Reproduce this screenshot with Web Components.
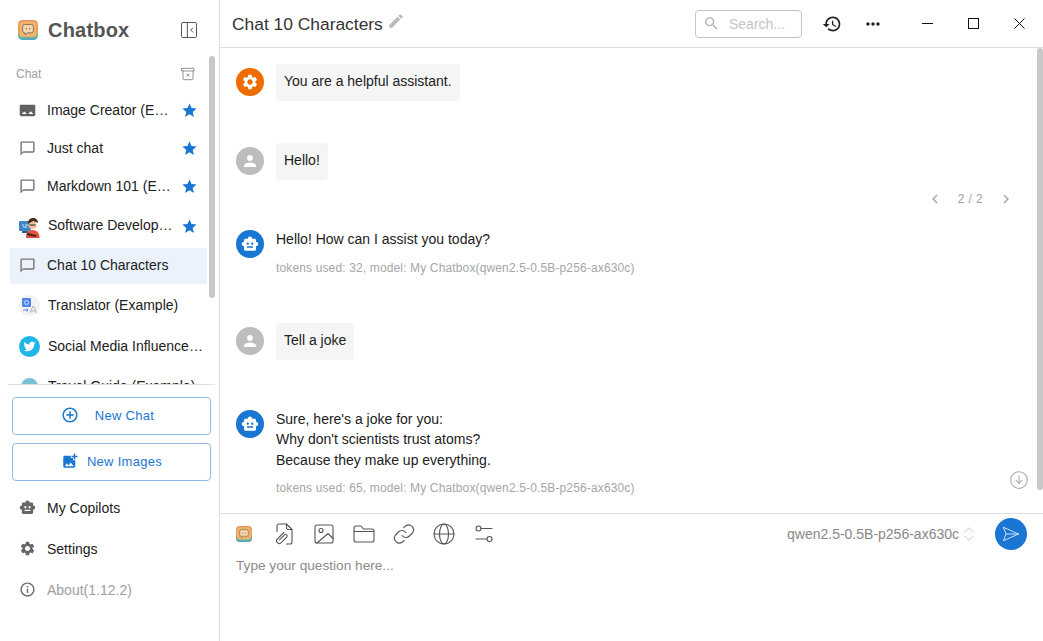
<!DOCTYPE html>
<html>
<head>
<meta charset="utf-8">
<title>Chatbox</title>
<style>
  html, body { margin: 0; height: 100%; overflow: hidden; background: #fff; }
  body { font-family: "Liberation Sans", Arial, sans-serif; font-size: 14px; color: #212121; }
</style>
</head>
<body>
<chat-app>
  <chat-sidebar slot="sidebar">
    <session-item icon="panorama" starred>Image Creator (Example)</session-item>
    <session-item icon="bubble" starred>Just chat</session-item>
    <session-item icon="bubble" starred>Markdown 101 (Example)</session-item>
    <session-item avatar="dev" starred h="40" lift>Software Developer (Example)</session-item>
    <session-item icon="bubble" selected lift>Chat 10 Characters</session-item>
    <session-item avatar="translate" h="38">Translator (Example)</session-item>
    <session-item avatar="twitter" h="40">Social Media Influencer (Example)</session-item>
    <session-item avatar="globe" h="36">Travel Guide (Example)</session-item>
  </chat-sidebar>
  <chat-main slot="main">
    <chat-message role="system" bubble style="--after:42px">You are a helpful assistant.</chat-message>
    <chat-message role="user" bubble style="--after:0px">Hello!</chat-message>
    <msg-pager></msg-pager>
    <chat-message role="assistant" tokens="tokens used: 32, model: My Chatbox(qwen2.5-0.5B-p256-ax630c)" style="--after:47px">Hello! How can I assist you today?</chat-message>
    <chat-message role="user" bubble style="--after:49px">Tell a joke</chat-message>
    <chat-message role="assistant" tokens="tokens used: 65, model: My Chatbox(qwen2.5-0.5B-p256-ax630c)">Sure, here's a joke for you:<br>Why don't scientists trust atoms?<br>Because they make up everything.</chat-message>
  </chat-main>
</chat-app>

<script>
const paths = {
  robot: 'M20 9V7c0-1.1-.9-2-2-2h-3c0-1.66-1.34-3-3-3S9 3.34 9 5H6c-1.1 0-2 .9-2 2v2c-1.66 0-3 1.34-3 3s1.34 3 3 3v4c0 1.1.9 2 2 2h12c1.1 0 2-.9 2-2v-4c1.66 0 3-1.34 3-3s-1.34-3-3-3zM7.5 11.5c0-.83.67-1.5 1.5-1.5s1.5.67 1.5 1.5S9.83 13 9 13s-1.5-.67-1.5-1.5zM16 17H8v-2h8v2zm-1-4c-.83 0-1.5-.67-1.5-1.5S14.17 10 15 10s1.5.67 1.5 1.5S15.83 13 15 13z',
  gear: 'M19.14 12.94c.04-.3.06-.61.06-.94 0-.32-.02-.64-.07-.94l2.03-1.58c.18-.14.23-.41.12-.61l-1.92-3.32c-.12-.22-.37-.29-.59-.22l-2.39.96c-.5-.38-1.03-.7-1.62-.94l-.36-2.54c-.04-.24-.24-.41-.48-.41h-3.84c-.24 0-.43.17-.47.41l-.36 2.54c-.59.24-1.13.57-1.62.94l-2.39-.96c-.22-.08-.47 0-.59.22L2.74 8.87c-.12.21-.08.47.12.61l2.03 1.58c-.05.3-.09.63-.09.94s.02.64.07.94l-2.03 1.58c-.18.14-.23.41-.12.61l1.92 3.32c.12.22.37.29.59.22l2.39-.96c.5.38 1.03.7 1.62.94l.36 2.54c.05.24.24.41.48.41h3.84c.24 0 .44-.17.47-.41l.36-2.54c.59-.24 1.13-.56 1.62-.94l2.39.96c.22.08.47 0 .59-.22l1.92-3.32c.12-.22.07-.47-.12-.61l-2.01-1.58zM12 15.6c-1.98 0-3.6-1.62-3.6-3.6s1.62-3.6 3.6-3.6 3.6 1.62 3.6 3.6-1.62 3.6-3.6 3.6z',
  person: 'M12 12c2.21 0 4-1.79 4-4s-1.79-4-4-4-4 1.79-4 4 1.79 4 4 4zm0 2c-2.67 0-8 1.34-8 4v2h16v-2c0-2.66-5.33-4-8-4z',
  bubble: 'M20 2H4c-1.1 0-2 .9-2 2v18l4-4h14c1.1 0 2-.9 2-2V4c0-1.1-.9-2-2-2zm0 14H6l-2 2V4h16v12z',
  star: 'M12 17.27 18.18 21l-1.64-7.03L22 9.24l-7.19-.61L12 2 9.19 8.63 2 9.24l5.46 4.73L5.82 21z',
  panorama: 'M23 18V6c0-1.1-.9-2-2-2H3c-1.1 0-2 .9-2 2v12c0 1.1.9 2 2 2h18c1.1 0 2-.9 2-2zM4 17l3.500-3.500L10 16l1 1zM13 17l3.500-4 4 4z',
  addcircle: 'M13 7h-2v4H7v2h4v4h2v-4h4v-2h-4V7zm-1-5C6.48 2 2 6.48 2 12s4.48 10 10 10 10-4.48 10-10S17.52 2 12 2zm0 18c-4.41 0-8-3.59-8-8s3.59-8 8-8 8 3.59 8 8-3.59 8-8 8z',
  addphoto: 'M19 7v2.99s-1.99.01-2 0V7h-3s.01-1.99 0-2h3V2h2v3h3v2h-3zm-3 4V8h-3V5H5c-1.1 0-2 .9-2 2v12c0 1.1.9 2 2 2h12c1.1 0 2-.9 2-2v-8h-3zM5 19l3-4 2 3 3-4 4 5H5z',
  info: 'M11 7h2v2h-2zm0 4h2v6h-2zm1-9C6.48 2 2 6.48 2 12s4.48 10 10 10 10-4.48 10-10S17.52 2 12 2zm0 18c-4.41 0-8-3.59-8-8s3.59-8 8-8 8 3.59 8 8-3.59 8-8 8z',
  edit: 'M3 17.25V21h3.75L17.81 9.94l-3.75-3.75L3 17.25zM20.71 7.04c.39-.39.39-1.02 0-1.41l-2.34-2.34c-.39-.39-1.02-.39-1.41 0l-1.83 1.83 3.75 3.75 1.83-1.83z',
  search: 'M15.5 14h-.79l-.28-.27C15.41 12.59 16 11.11 16 9.5 16 5.91 13.09 3 9.5 3S3 5.91 3 9.5 5.91 16 9.5 16c1.61 0 3.09-.59 4.23-1.57l.27.28v.79l5 4.99L20.49 19l-4.99-5zm-6 0C7.01 14 5 11.99 5 9.5S7.01 5 9.5 5 14 7.01 14 9.5 11.99 14 9.5 14z',
  history: 'M13 3c-4.97 0-9 4.03-9 9H1l3.89 3.89.07.14L9 12H6c0-3.87 3.13-7 7-7s7 3.13 7 7-3.13 7-7 7c-1.93 0-3.68-.79-4.94-2.06l-1.42 1.42C8.27 19.99 10.51 21 13 21c4.97 0 9-4.03 9-9s-4.03-9-9-9zm-1 5v5l4.28 2.54.72-1.21-3.5-2.08V8H12z',
  more: 'M6 10c-1.1 0-2 .9-2 2s.9 2 2 2 2-.9 2-2-.9-2-2-2zm12 0c-1.1 0-2 .9-2 2s.9 2 2 2 2-.9 2-2-.9-2-2-2zm-6 0c-1.1 0-2 .9-2 2s.9 2 2 2 2-.9 2-2-.9-2-2-2z',
  prev: 'M15.41 7.41 14 6l-6 6 6 6 1.41-1.41L10.83 12z',
  next: 'M10 6 8.59 7.41 13.17 12l-4.58 4.59L10 18l6-6z'
}

// stroke icons for the toolbar, all on a 24 box
const strokes = {
  filepin: '<path d="M5 9.500V4a2 2 0 0 1 2-2h7.500L20 7.500V20a2 2 0 0 1-2 2h-3.500"/><path d="M14.500 2v4a1.500 1.500 0 0 0 1.500 1.500h4"/><path d="M11.800 10.500 5.200 17.100a2.700 2.700 0 0 0 3.800 3.800l5.700-5.800a1.600 1.600 0 0 0-2.300-2.300l-5 5"/>',
  image: '<rect x="3" y="3" width="18" height="18" rx="2"/><circle cx="9" cy="8.500" r="2"/><path d="M21 16.500l-5-5L5 21"/>',
  folder: '<path d="M2 6a2 2 0 0 1 2-2h5l2.500 3H20a2 2 0 0 1 2 2v9a2 2 0 0 1-2 2H4a2 2 0 0 1-2-2z"/><path d="M2 9.500h20"/>',
  link: '<path d="M10 13.500a5 5 0 0 0 7.500.5l3-3a5 5 0 0 0-7-7l-1.700 1.700"/><path d="M14 10.500a5 5 0 0 0-7.500-.5l-3 3a5 5 0 0 0 7 7l1.700-1.700"/>',
  globe: '<circle cx="12" cy="12" r="10"/><path d="M2 12h20"/><ellipse cx="12" cy="12" rx="4.500" ry="10"/>',
  sliders: '<circle cx="6.500" cy="6.500" r="2.500"/><path d="M9 6.500h11"/><circle cx="17.500" cy="17" r="2.500"/><path d="M15 17H4"/>',
  sidebar: '<rect x="3" y="3" width="18" height="18" rx="1.500"/><path d="M10 3v18"/><path d="M16.500 9.500 14 12l2.500 2.500"/>',
  archive: '<path d="M3 3.500h18v4H3z"/><path d="M4.500 7.500V19a1.500 1.500 0 0 0 1.500 1.500h12a1.500 1.500 0 0 0 1.500-1.500V7.500"/><path d="M10.300 12l3.400 3.400M13.700 12l-3.400 3.400"/>',
  down: '<circle cx="12" cy="12" r="10"/><path d="M12 7v9"/><path d="M8.500 12.500 12 16l3.500-3.500"/>',
  updown: '<path d="M7 9.500 12 4.500l5 5"/><path d="M7 14.500l5 5 5-5"/>',
  send: '<path d="M3 4l18 8-18 8 3-8z"/><path d="M6 12h15"/>'
}

class AppIcon extends HTMLElement {
  connectedCallback() {
    const name = this.getAttribute('name')
    const size = this.getAttribute('size') || 20
    const color = this.getAttribute('color') || '#666'
    const sw = this.getAttribute('sw') || 1.5
    const inner = paths[name]
      ? `<path fill="${color}" fill-rule="evenodd" d="${paths[name]}"/>`
      : `<g fill="none" stroke="${color}" stroke-width="${sw}" stroke-linecap="round" stroke-linejoin="round">${strokes[name]}</g>`
    this.attachShadow({ mode: 'open' }).innerHTML = `
      <style>:host { display: inline-flex; flex: none; width: ${size}px; height: ${size}px; } svg { display: block; }</style>
      <svg width="${size}" height="${size}" viewBox="0 0 24 24">${inner}</svg>`
  }
}
customElements.define('app-icon', AppIcon)

class AppLogo extends HTMLElement {
  connectedCallback() {
    const size = this.getAttribute('size') || 20
    this.attachShadow({ mode: 'open' }).innerHTML = `
      <style>:host { display: inline-flex; flex: none; } svg { display: block; }</style>
      <svg width="${size}" height="${size}" viewBox="0 0 20 20">
        <defs>
          <linearGradient id="edge" x1="0" y1="0" x2="0" y2="1">
            <stop offset="0" stop-color="#e8915f"/><stop offset=".55" stop-color="#e9a451"/>
            <stop offset=".8" stop-color="#6dbb8c"/><stop offset="1" stop-color="#4fa6c9"/>
          </linearGradient>
        </defs>
        <rect width="20" height="20" rx="4.500" fill="url(#edge)"/>
        <rect x="1.600" y="1.600" width="16.800" height="15.400" rx="3" fill="#f2b46d"/>
        <path d="M6.600 4.600h6.800a2 2 0 0 1 2 2v4.200a2 2 0 0 1-2 2H9.400L7 14.600v-1.800h-.4a2 2 0 0 1-2-2V6.600a2 2 0 0 1 2-2z" fill="#f8d7ae" stroke="#7b6a58" stroke-width=".9"/>
        <circle cx="8.300" cy="8.700" r=".7" fill="#7b6a58"/><circle cx="11.700" cy="8.700" r=".7" fill="#7b6a58"/>
      </svg>`
  }
}
customElements.define('app-logo', AppLogo)

// the little picture avatars of the example copilots
const avatars = {
  dev: `<svg width="21" height="21" viewBox="0 0 21 21" style="margin-top:2px">
    <rect x="0" y="4" width="12" height="10" rx="1" fill="#3f86c6"/><path d="M3 14h6v2H3z" fill="#2f5f8c"/>
    <path d="M3 8h2M6 8h3M4 10h4" stroke="#cfe6fa"/>
    <path d="M7 21c0-5 2-8 6.500-8s7 3 7 8z" fill="#e8503a"/>
    <circle cx="13.500" cy="8" r="4" fill="#f2c09a"/><path d="M9 7c0-4 2-6 5-6s5 2 5 5l-2-1-3-1z" fill="#4a2a1a"/>
    <path d="M10.500 8h6" stroke="#222" stroke-width="1"/><path d="M8 17l9 2" stroke="#3a2a22" stroke-width="2"/></svg>`,
  translate: `<svg width="21" height="21" viewBox="0 0 21 21">
    <circle cx="10.500" cy="10.500" r="10.500" fill="#f2f2f2"/>
    <rect x="3" y="3" width="9" height="9" rx="1" fill="#4f86ec"/><circle cx="7.500" cy="7.500" r="2" fill="none" stroke="#cfe0fb"/>
    <path d="M4 15h5l-1.500-1.500M9 15l-1.500 1.500" stroke="#4f86ec" fill="none"/>
    <path d="M11 18l2.800-6.500h1l2.800 6.500M12.200 16h4" stroke="#aab4c4" fill="none"/></svg>`,
  twitter: `<svg width="21" height="21" viewBox="0 0 21 21">
    <circle cx="10.500" cy="10.500" r="10.500" fill="#1fb6ea"/>
    <g transform="translate(4.500 4.500) scale(.5)"><path fill="#fff" d="M23.953 4.57a10 10 0 01-2.825.775 4.958 4.958 0 002.163-2.723c-.951.555-2.005.959-3.127 1.184a4.92 4.92 0 00-8.384 4.482C7.69 8.095 4.067 6.13 1.64 3.162a4.822 4.822 0 00-.666 2.475c0 1.71.87 3.213 2.188 3.971a4.904 4.904 0 01-2.228-.616v.06a4.923 4.923 0 003.946 4.827 4.996 4.996 0 01-2.212.085 4.936 4.936 0 004.604 3.417 9.867 9.867 0 01-6.102 2.105c-.39 0-.779-.023-1.17-.067a13.995 13.995 0 007.557 2.209c9.053 0 13.998-7.496 13.998-13.985 0-.21 0-.42-.015-.63A9.935 9.935 0 0024 4.59z"/></g></svg>`,
  globe: `<svg width="21" height="21" viewBox="0 0 21 21"><circle cx="10.500" cy="10.500" r="8.500" fill="#7cc0d8"/></svg>`
}

class SessionItem extends HTMLElement {
  connectedCallback() {
    const icon = this.getAttribute('icon')
    const avatar = this.getAttribute('avatar')
    const h = this.getAttribute('h') || 36
    const lead = avatar
      ? `<span class="avatar">${avatars[avatar]}</span>`
      : `<span class="lead"><app-icon name="${icon}" size="17" color="${icon === 'panorama' ? '#616161' : '#757575'}"></app-icon></span>`
    const star = this.hasAttribute('starred')
      ? `<app-icon class="star" name="star" size="17" color="#1976d2"></app-icon>` : ''
    this.attachShadow({ mode: 'open' }).innerHTML = `
      <style>
        :host { display: flex; align-items: center; height: ${h}px; margin-bottom: 2px; padding: 0 4px 0 9px; color: #212121; }
        :host([selected]) { background: #ebf2fb; }
        :host([lift]) .name { margin-top: -2px; }
        :host([selected]) .lead { margin-top: -2px; }
        .lead { display: flex; width: 17px; margin-right: 11px; }
        .avatar { display: flex; width: 21px; margin-right: 8px; }
        .name { flex: 1; min-width: 0; white-space: nowrap; overflow: hidden; text-overflow: ellipsis; font-size: 14px; line-height: 20px; }
        .star { margin-left: 7.500px; margin-right: 5px; }
      </style>
      ${lead}<span class="name"><slot></slot></span>${star}`
  }
}
customElements.define('session-item', SessionItem)

class SideButton extends HTMLElement {
  connectedCallback() {
    this.attachShadow({ mode: 'open' }).innerHTML = `
      <style>
        :host { display: flex; align-items: center; justify-content: center; gap: var(--gap, 16px); box-sizing: border-box; height: 38px; padding-bottom: 2px; border: 1px solid #8dbbe9; border-radius: 4px; color: #1976d2; font-size: 13px; letter-spacing: .3px; }
      </style>
      <app-icon name="${this.getAttribute('icon')}" size="18" color="#1976d2"></app-icon><slot></slot>`
  }
}
customElements.define('side-button', SideButton)

class SideLink extends HTMLElement {
  connectedCallback() {
    const muted = this.hasAttribute('muted')
    this.attachShadow({ mode: 'open' }).innerHTML = `
      <style>
        :host { display: flex; align-items: center; height: 41px; padding-left: 19px; color: ${muted ? '#9e9e9e' : '#212121'}; font-size: 14px; }
        app-icon { margin-right: 11px; }
      </style>
      <app-icon name="${this.getAttribute('icon')}" size="17" color="#666"></app-icon><slot></slot>`
  }
}
customElements.define('side-link', SideLink)

const sidebarTemplate = document.createElement('template')
sidebarTemplate.innerHTML = `
<style>
  :host { display: flex; flex-direction: column; height: 100%; box-sizing: border-box; border-right: 1px solid #e0e0e0; }
  .brand { display: flex; align-items: center; height: 56px; padding: 4px 20px 0 18px; box-sizing: border-box; }
  .brand b { flex: 1; margin-left: 10px; font-size: 20px; font-weight: 700; letter-spacing: .2px; color: #555; }
  .list { position: relative; height: 329px; box-sizing: border-box; overflow: hidden; border-bottom: 1px solid #e0e0e0; margin: 0 4px 0 8px; padding: 0 8px 0 2px; }
  .section { display: flex; align-items: center; justify-content: space-between; height: 36px; margin-left: -2px; padding: 0 11px 0 8px; color: #9e9e9e; font-size: 12px; }
  .thumb { position: absolute; right: 0; top: 0; width: 6px; height: 242px; background: #c8c8c8; border-radius: 3px; }
  .actions { display: flex; flex-direction: column; gap: 8px; padding: 12px 8px 6px 12px; }
  .links { display: flex; flex-direction: column; }
</style>
<div class="brand">
  <app-logo size="20"></app-logo><b>Chatbox</b>
  <app-icon name="sidebar" size="20" color="#555" sw="1.200"></app-icon>
</div>
<div class="list">
  <div class="section"><span>Chat</span><app-icon name="archive" size="16" color="#777" sw="1.200"></app-icon></div>
  <slot></slot>
  <div class="thumb"></div>
</div>
<div class="actions">
  <side-button icon="addcircle" style="padding-right:8px">New Chat</side-button>
  <side-button icon="addphoto" style="--gap:8px">New Images</side-button>
</div>
<div class="links">
  <side-link icon="robot">My Copilots</side-link>
  <side-link icon="gear">Settings</side-link>
  <side-link icon="info" muted>About(1.12.2)</side-link>
</div>`

class ChatSidebar extends HTMLElement {
  constructor() {
    super()
    this.attachShadow({ mode: 'open' }).append(sidebarTemplate.content.cloneNode(true))
  }
}
customElements.define('chat-sidebar', ChatSidebar)

class ChatMessage extends HTMLElement {
  connectedCallback() {
    const role = this.getAttribute('role')
    const look = {
      system: ['#ef6c00', 'gear'],
      user: ['#bdbdbd', 'person'],
      assistant: ['#1976d2', 'robot']
    }[role]
    const tokens = this.getAttribute('tokens')
    this.attachShadow({ mode: 'open' }).innerHTML = `
      <style>
        :host { display: flex; gap: 12px; padding-left: 16px; margin-bottom: var(--after, 0px); color: #212121; }
        .avatar { display: flex; align-items: center; justify-content: center; flex: none; width: 28px; height: 28px; border-radius: 50%; background: ${look[0]}; margin-top: ${this.hasAttribute('bubble') ? 4 : 1}px; }
        .text { font-size: 14px; line-height: 20.500px; }
        .bubble { background: #f5f5f5; border-radius: 4px; padding: 7px 8px 9px; line-height: 21px; }
        .tokens { margin-top: 10px; font-size: 12px; line-height: 16px; color: #a6a6a6; letter-spacing: .14px; }
      </style>
      <div class="avatar"><app-icon name="${look[1]}" size="18" color="#fff"></app-icon></div>
      <div>
        <div class="text ${this.hasAttribute('bubble') ? 'bubble' : ''}"><slot></slot></div>
        ${tokens ? `<div class="tokens">${tokens}</div>` : ''}
      </div>`
  }
}
customElements.define('chat-message', ChatMessage)

class MsgPager extends HTMLElement {
  connectedCallback() {
    this.attachShadow({ mode: 'open' }).innerHTML = `
      <style>
        :host { display: flex; align-items: center; justify-content: flex-end; gap: 14px; height: 49px; padding: 0 28px 11px 0; color: #9e9e9e; font-size: 12px; letter-spacing: .4px; box-sizing: border-box; }
      </style>
      <app-icon name="prev" size="18" color="#aaa"></app-icon><span>2 / 2</span><app-icon name="next" size="18" color="#aaa"></app-icon>`
  }
}
customElements.define('msg-pager', MsgPager)

class WinButton extends HTMLElement {
  connectedCallback() {
    const kind = this.getAttribute('kind')
    const shape = {
      min: '<path d="M0 5.500h11" />',
      max: '<rect x=".5" y=".5" width="10" height="10"/>',
      close: '<path d="M.5 .5l10 10M10.500 .5l-10 10"/>'
    }[kind]
    this.attachShadow({ mode: 'open' }).innerHTML = `
      <style>:host { display: flex; width: 46px; height: 47px; align-items: center; justify-content: center; } svg { display: block; }</style>
      <svg width="12" height="11" viewBox="0 0 12 11" fill="none" stroke="#111" stroke-width="1">${shape}</svg>`
  }
}
customElements.define('win-button', WinButton)

const mainTemplate = document.createElement('template')
mainTemplate.innerHTML = `
<style>
  :host { display: flex; flex-direction: column; height: 100%; min-width: 0; }
  header { display: flex; align-items: center; flex: none; height: 48px; box-sizing: border-box; border-bottom: 1px solid #e0e0e0; padding-left: 12px; }
  .title { font-size: 17.400px; color: #333; padding-top: 1px; }
  .title-edit { margin-left: 4px; margin-top: -5px; }
  .spacer { flex: 1; }
  .search { display: flex; align-items: center; gap: 9px; width: 107px; height: 28px; box-sizing: border-box; border: 1px solid #c4c4c4; border-radius: 4px; padding-left: 7px; color: #c4c4c4; font-size: 14px; margin-right: 20px; }
  .tool { margin-right: 21px; display: flex; }
  .tool.last { margin-right: 23px; }
  .windows { display: flex; margin-left: -1px; }
  .scroll { position: relative; flex: none; height: 466px; box-sizing: border-box; padding-top: 16px; overflow: hidden; border-bottom: 1px solid #e0e0e0; }
  .thumb { position: absolute; right: 0; top: 0; width: 6px; height: 442px; background: #c8c8c8; border-radius: 3px; }
  .to-bottom { position: absolute; right: 14px; top: 422px; }
  .toolbar { display: flex; align-items: center; flex: none; height: 40px; padding: 0 16px; }
  .tools { display: flex; align-items: center; gap: 16px; flex: 1; }
  .tools > * { flex: none; }
  .model { color: #888; font-size: 14px; }
  .send { display: flex; align-items: center; justify-content: center; width: 32px; height: 32px; border-radius: 50%; background: #1976d2; margin-left: 16px; }
  .placeholder { padding: 0 16px; margin-top: 2px; font-size: 13.650px; line-height: 20px; color: #8a8a8a; }
</style>
<header>
  <span class="title">Chat 10 Characters</span>
  <app-icon class="title-edit" name="edit" size="18" color="#bbb"></app-icon>
  <span class="spacer"></span>
  <div class="search"><app-icon name="search" size="17" color="#b5b5b5"></app-icon><span>Search...</span></div>
  <app-icon class="tool" name="history" size="20" color="#212121"></app-icon>
  <app-icon class="tool last" name="more" size="20" color="#212121"></app-icon>
  <div class="windows"><win-button kind="min"></win-button><win-button kind="max"></win-button><win-button kind="close"></win-button></div>
</header>
<div class="scroll">
  <slot></slot>
  <div class="thumb"></div>
  <app-icon class="to-bottom" name="down" size="20" color="#aaa" sw="1.300"></app-icon>
</div>
<div class="toolbar">
  <div class="tools">
    <app-logo size="16" style="margin-right:4px"></app-logo>
    <app-icon name="filepin" size="24" color="#555" sw="1.100"></app-icon>
    <app-icon name="image" size="24" color="#555" sw="1.100"></app-icon>
    <app-icon name="folder" size="24" color="#555" sw="1.100"></app-icon>
    <app-icon name="link" size="24" color="#555" sw="1.100"></app-icon>
    <app-icon name="globe" size="24" color="#555" sw="1.100"></app-icon>
    <app-icon name="sliders" size="24" color="#555" sw="1.100"></app-icon>
  </div>
  <span class="model">qwen2.5-0.5B-p256-ax630c</span>
  <app-icon name="updown" size="20" color="#c8c8c8" sw="1.200"></app-icon>
  <div class="send"><app-icon name="send" size="20" color="#cfe2f5" sw="1.200"></app-icon></div>
</div>
<div class="placeholder">Type your question here...</div>`

class ChatMain extends HTMLElement {
  constructor() {
    super()
    this.attachShadow({ mode: 'open' }).append(mainTemplate.content.cloneNode(true))
  }
}
customElements.define('chat-main', ChatMain)

class ChatApp extends HTMLElement {
  constructor() {
    super()
    this.attachShadow({ mode: 'open' }).innerHTML = `
      <style>
        :host { display: grid; grid-template-columns: 220px 1fr; height: 100vh; }
      </style>
      <slot name="sidebar"></slot><slot name="main"></slot>`
  }
}
customElements.define('chat-app', ChatApp)
</script>
</body>
</html>
